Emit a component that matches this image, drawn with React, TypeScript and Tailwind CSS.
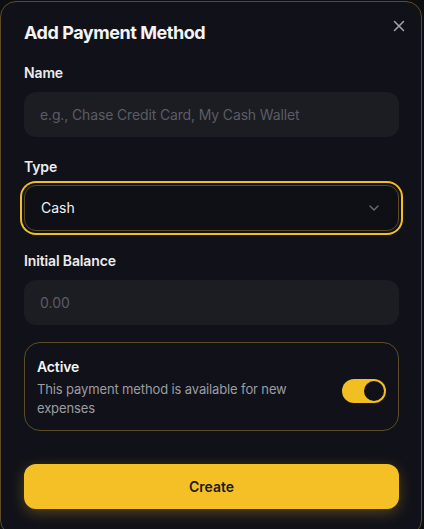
import React, { useState } from 'react';
import { X, ChevronDown } from 'lucide-react';

const Label: React.FC<{ children: React.ReactNode; className?: string }> = ({ children, className = '' }) => (
    <label className={`block text-sm leading-5 font-semibold text-[#ececef] tracking-[-0.01em] ${className}`}>{children}</label>
);

export default function App() {
    const [active, setActive] = useState(true);

    return (
        <div className="h-[529px] w-[424px] overflow-hidden bg-[#0d0e13] font-['Inter',sans-serif]">
            <div className="relative mt-px w-[422px] h-[535px] rounded-2xl border border-[#5e4d22] bg-[#111219] pl-[23px] pr-[22px] pt-[17px]">
                <button className="absolute right-[13px] top-[15px] text-[#a3a3ab]">
                    <X size={18} strokeWidth={2} />
                </button>

                <h2 className="text-lg leading-7 font-bold text-[#f4f4f6] tracking-[-0.025em]">Add Payment Method</h2>

                <Label className="mt-4">Name</Label>
                <input
                    type="text"
                    placeholder="e.g., Chase Credit Card, My Cash Wallet"
                    className="mt-[9px] block w-full h-[45px] rounded-xl bg-[#1c1d23] px-4 text-sm tracking-[-0.01em] text-[#ececef] placeholder-[#5b5c63] outline-none"
                />

                <Label className="mt-5">Type</Label>
                <div className="mt-2 flex h-[46px] w-full items-center justify-between rounded-xl border border-[#5c4a1c] bg-[#0f1016] pl-4 pr-4 ring-2 ring-[#f2bf22] ring-offset-2 ring-offset-[#111219]">
                    <span className="text-sm text-[#f0f0f2]">Cash</span>
                    <ChevronDown size={16} className="text-[#6c6d74]" strokeWidth={2} />
                </div>

                <Label className="mt-5">Initial Balance</Label>
                <input
                    type="text"
                    placeholder="0.00"
                    className="mt-[9px] block w-full h-[45px] rounded-xl bg-[#1c1d23] px-4 text-sm text-[#ececef] placeholder-[#5b5c63] outline-none"
                />

                <div className="mt-[17px] flex h-[89px] items-center justify-between gap-4 rounded-2xl border border-[#5e4d22] px-3 pt-px">
                    <div className="max-w-[290px]">
                        <div className="text-sm leading-5 font-semibold text-[#f4f4f6] tracking-[-0.01em]">Active</div>
                        <p className="mt-[3px] text-[13px] leading-[19px] text-[#9c9ca3] tracking-[-0.01em]">
                            This payment method is available for new expenses
                        </p>
                    </div>
                    <button
                        onClick={() => setActive(!active)}
                        className="relative mt-2 h-6 w-11 shrink-0 rounded-full bg-[#f2bf22]"
                    >
                        <span className={`absolute top-[2px] h-5 w-5 rounded-full bg-[#111219] ${active ? 'right-[2px]' : 'left-[2px]'}`} />
                    </button>
                </div>

                <button className="mt-[33px] block h-[45px] w-full rounded-xl bg-[#f4c026] text-sm font-semibold text-[#1b1b1f] shadow-[0_4px_14px_rgba(244,192,38,0.28)]">
                    Create
                </button>
            </div>
        </div>
    );
}
